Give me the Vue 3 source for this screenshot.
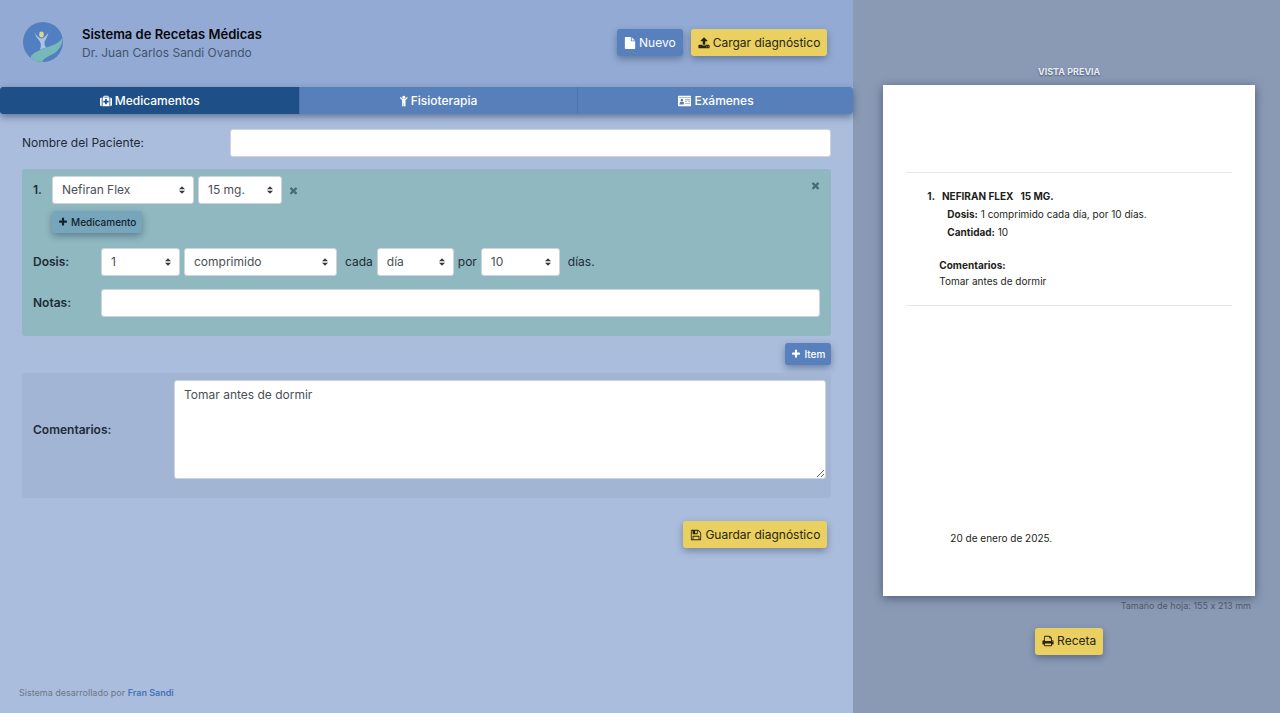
<script setup>
import { ref, computed, h } from 'vue'

const paths = {
  plus: 'M1600 736v192q0 40-28 68t-68 28h-416v416q0 40-28 68t-68 28h-192q-40 0-68-28t-28-68v-416h-416q-40 0-68-28t-28-68v-192q0-40 28-68t68-28h416v-416q0-40 28-68t68-28h192q40 0 68 28t28 68v416h416q40 0 68 28t28 68z',
  close: 'M1490 1322q0 40-28 68l-136 136q-28 28-68 28t-68-28l-294-294-294 294q-28 28-68 28t-68-28l-136-136q-28-28-28-68t28-68l294-294-294-294q-28-28-28-68t28-68l136-136q28-28 68-28t68 28l294 294 294-294q28-28 68-28t68 28l136 136q28 28 28 68t-28 68l-294 294 294 294q28 28 28 68z',
  upload: 'M1344 1472q0-26-19-45t-45-19-45 19-19 45 19 45 45 19 45-19 19-45zm256 0q0-26-19-45t-45-19-45 19-19 45 19 45 45 19 45-19 19-45zm128-224v320q0 40-28 68t-68 28h-1472q-40 0-68-28t-28-68v-320q0-40 28-68t68-28h427q21 56 70.5 92t110.5 36h256q61 0 110.5-36t70.5-92h427q40 0 68 28t28 68zm-325-648q-17 40-59 40h-256v448q0 26-19 45t-45 19h-256q-26 0-45-19t-19-45v-448h-256q-42 0-59-40-17-39 14-69l448-448q18-19 45-19t45 19l448 448q31 30 14 69z',
  print: 'M448 1536h896v-256h-896v256zm0-640h896v-384h-160q-40 0-68-28t-28-68v-160h-640v640zm1152 64q0-26-19-45t-45-19-45 19-19 45 19 45 45 19 45-19 19-45zm128 0v416q0 13-9.5 22.5t-22.5 9.5h-224v160q0 40-28 68t-68 28h-960q-40 0-68-28t-28-68v-160h-224q-13 0-22.5-9.5t-9.5-22.5v-416q0-79 56.5-135.5t135.5-56.5h64v-544q0-40 28-68t68-28h672q40 0 88 20t76 48l152 152q28 28 48 76t20 88v256h64q79 0 135.5 56.5t56.5 135.5z',
  save: 'M512 1536h768v-384h-768v384zm896 0h128v-896q0-14-10-38.5t-20-34.5l-281-281q-10-10-34-20t-39-10v416q0 40-28 68t-68 28h-576q-40 0-68-28t-28-68v-416h-128v1280h128v-416q0-40 28-68t68-28h832q40 0 68 28t28 68v416zm-384-928v-320q0-13-9.5-22.5t-22.5-9.5h-192q-13 0-22.5 9.5t-9.5 22.5v320q0 13 9.5 22.5t22.5 9.5h192q13 0 22.5-9.5t9.5-22.5zm640 32v928q0 40-28 68t-68 28h-1344q-40 0-68-28t-28-68v-1344q0-40 28-68t68-28h928q40 0 88 20t76 48l280 280q28 28 48 76t20 88z',
  file: 'M1152 512v-472q22 14 36 28l408 408q14 14 28 36h-472zm-128 32q0 40 28 68t68 28h544v1056q0 40-28 68t-68 28h-1344q-40 0-68-28t-28-68v-1600q0-40 28-68t68-28h800v544z',
  medkit: 'M1280 1088v-192q0-14-9-23t-23-9h-224v-224q0-14-9-23t-23-9h-192q-14 0-23 9t-9 23v224h-224q-14 0-23 9t-9 23v192q0 14 9 23t23 9h224v224q0 14 9 23t23 9h192q14 0 23-9t9-23v-224h224q14 0 23-9t9-23zm-640-704h512v-128h-512v128zm-384 0v1280h-32q-92 0-158-66t-66-158v-832q0-92 66-158t158-66h32zm1152 0v1280h-1024v-1280h128v-160q0-40 28-68t68-28h576q40 0 68 28t28 68v160h128zm384 224v832q0 92-66 158t-158 66h-32v-1280h32q92 0 158 66t66 158z',
  child: 'M1124 484l-292 292v824q0 46-33 79t-79 33-79-33-33-79v-384h-64v384q0 46-33 79t-79 33-79-33-33-79v-824l-292-292q-28-28-28-68t28-68q29-28 68.500-28t67.500 28l228 228h368l228-228q28-28 68-28t68 28q28 29 28 68.500t-28 67.500zm-324-164q0 93-65.500 158.500t-158.500 65.500-158.500-65.500-65.500-158.500 65.500-158.500 158.500-65.500 158.500 65.500 65.500 158.500z',
  card: 'M128 128h1792q53 0 90.500 37.500t37.500 90.500v1280q0 53-37.500 90.500t-90.500 37.500h-1792q-53 0-90.500-37.500t-37.500-90.500v-1280q0-53 37.500-90.500t90.500-37.500zM128 288v96h1792v-96zM256 1290q0-290 170-330 62 64 150 64t150-64q170 40 170 330 0 118-100 118h-540q-100 0-100-118zM384 736a192 192 0 1 0 384 0a192 192 0 1 0-384 0zM1056 1184h736v96h-736zM1056 928h288v96h-288zM1504 928h288v96h-288zM1056 672h736v96h-736z'
}
const widths = { child: 1152, card: 2048 }

const Icon = (props) =>
  h('svg', { class: 'icon', viewBox: `0 0 ${widths[props.name] || 1792} 1792`, 'aria-hidden': 'true' }, [
    h('path', { d: paths[props.name], 'fill-rule': props.name === 'card' ? 'evenodd' : 'nonzero' })
  ])
Icon.props = ['name']

const Arrows = () =>
  h('svg', { class: 'arrows', viewBox: '0 0 4 5', 'aria-hidden': 'true' }, [
    h('path', { d: 'M2 0L0 2h4zm0 5L0 3h4z' })
  ])

const tabs = [
  { id: 'med', label: 'Medicamentos', icon: 'medkit' },
  { id: 'fis', label: 'Fisioterapia', icon: 'child' },
  { id: 'exa', label: 'Exámenes', icon: 'card' }
]
const activeTab = ref('med')
const patient = ref('')
const drug = ref('Nefiran Flex')
const strength = ref('15 mg.')
const amount = ref('1')
const form = ref('comprimido')
const period = ref('día')
const days = ref('10')
const notes = ref('')
const comments = ref('Tomar antes de dormir')
const total = computed(() => Number(amount.value) * Number(days.value))
</script>

<template>
  <div class="app">
    <main class="editor">
      <header class="header">
        <svg class="logo" viewBox="0 0 40 40" aria-hidden="true">
          <circle cx="20" cy="20" r="20" fill="#527fc1" />
          <path d="M39.500 15.500C35 24 24 24 15 29C10 31.500 7 34 8 36Q12 39.500 19 40C22 34 29 34 34 29Q40 23 39.500 15.500Z" fill="#76b9b8" />
          <path d="M11.500 10.500Q15 16 18.500 16.500Q21 16.500 25.500 10.500Q23.500 17 21.500 19.500Q21 23 23 25.500L17 27.500Q19 22 16.500 19Q13 16 11.500 10.500Z" fill="#a9c4e2" />
          <ellipse cx="18.500" cy="12.500" rx="2.300" ry="3" fill="#d9d780" />
        </svg>
        <div class="brand">
          <h1>Sistema de Recetas Médicas</h1>
          <p>Dr. Juan Carlos Sandi Ovando</p>
        </div>
        <div class="actions">
          <button type="button" class="btn blue"><Icon name="file" />Nuevo</button>
          <button type="button" class="btn yellow"><Icon name="upload" />Cargar diagnóstico</button>
        </div>
      </header>

      <nav class="tabs">
        <button
          v-for="t in tabs"
          :key="t.id"
          type="button"
          class="tab"
          :class="{ active: activeTab === t.id }"
          @click="activeTab = t.id"
        ><Icon :name="t.icon" />{{ t.label }}</button>
      </nav>

      <form class="form" @submit.prevent>
        <div class="patient">
          <label for="patient">Nombre del Paciente:</label>
          <input id="patient" v-model="patient" type="text" class="control">
        </div>

        <section class="item">
          <button type="button" class="remove corner" aria-label="Quitar ítem"><Icon name="close" /></button>
          <div class="drug-row">
            <strong class="number">1.</strong>
            <span class="select drug">
              <select v-model="drug" class="control" aria-label="Medicamento"><option>Nefiran Flex</option></select><Arrows />
            </span>
            <span class="select strength">
              <select v-model="strength" class="control" aria-label="Concentración"><option>15 mg.</option></select><Arrows />
            </span>
            <button type="button" class="remove" aria-label="Quitar medicamento"><Icon name="close" /></button>
          </div>
          <button type="button" class="btn small teal"><Icon name="plus" />Medicamento</button>
          <div class="dose-row">
            <label class="field-name" for="amount">Dosis:</label>
            <span class="select short">
              <select id="amount" v-model="amount" class="control"><option>1</option></select><Arrows />
            </span>
            <span class="select kind">
              <select v-model="form" class="control" aria-label="Forma"><option>comprimido</option></select><Arrows />
            </span>
            <label class="word" for="period">cada</label>
            <span class="select period">
              <select id="period" v-model="period" class="control"><option>día</option></select><Arrows />
            </span>
            <label for="days">por</label>
            <span class="select short">
              <select id="days" v-model="days" class="control"><option>10</option></select><Arrows />
            </span>
            <span class="word">días.</span>
          </div>
          <div class="notes-row">
            <label class="field-name" for="notes">Notas:</label>
            <input id="notes" v-model="notes" type="text" class="control">
          </div>
        </section>

        <button type="button" class="btn small blue add-item"><Icon name="plus" />Item</button>

        <section class="comments">
          <label for="comments">Comentarios:</label>
          <textarea id="comments" v-model="comments" class="control"></textarea>
        </section>

        <button type="submit" class="btn yellow save"><Icon name="save" />Guardar diagnóstico</button>
      </form>

      <footer class="footer">Sistema desarrollado por <a href="#">Fran Sandi</a></footer>
    </main>

    <aside class="preview">
      <h2>VISTA PREVIA</h2>
      <article class="sheet">
        <div class="sheet-body">
          <div class="rx-title"><span>1.</span><span>{{ drug.toUpperCase() }}</span><span>{{ strength.toUpperCase() }}</span></div>
          <p class="rx-line"><b>Dosis:</b> {{ amount }} {{ form }} cada {{ period }}, por {{ days }} días.</p>
          <p class="rx-line"><b>Cantidad:</b> {{ total }}</p>
          <div class="rx-comments"><b>Comentarios:</b><p>{{ comments }}</p></div>
        </div>
        <p class="date">20 de enero de 2025.</p>
      </article>
      <p class="size">Tamaño de hoja: 155 x 213 mm</p>
      <button type="button" class="btn yellow"><Icon name="print" />Receta</button>
    </aside>
  </div>
</template>

<style>
body {
  margin: 0;
}
</style>

<style scoped>
.app {
  display: grid;
  grid-template-columns: 2fr 1fr;
  min-height: 100vh;
  font-family: Inter, "Liberation Sans", sans-serif;
  font-size: 12px;
  line-height: 18px;
  font-feature-settings: "calt" 0;
  color: #212b38;
}
.app * {
  box-sizing: border-box;
}
h1, h2, p {
  margin: 0;
}
button, input, select, textarea {
  font: inherit;
}
button {
  cursor: pointer;
}
.editor {
  position: relative;
  z-index: 1;
  display: flex;
  flex-direction: column;
  min-width: 0;
  background: #abbddd;
}
.header {
  display: flex;
  align-items: center;
  padding: 21px 26px 23px 23px;
  height: 87px;
  background: #93abd4;
}
.logo {
  width: 40px;
  height: 40px;
  margin: 0 19px 2px 0;
}
.brand {
  color: #42536c;
}
.brand h1 {
  font-size: 13px;
  line-height: 20px;
  font-weight: 600;
  color: #05070b;
}
.actions {
  display: flex;
  gap: 8px;
  margin-left: auto;
}
.app :deep(.icon) {
  height: 12px;
  flex: none;
  fill: currentColor;
}
.btn {
  display: inline-flex;
  align-items: center;
  justify-content: center;
  gap: 3px;
  height: 27px;
  padding: 0 7px;
  border: 0;
  border-radius: 3px;
  white-space: nowrap;
  box-shadow: 0 3px 7px rgba(30, 45, 75, 0.4);
}
.blue {
  background: #5780bd;
  color: #fff;
}
.yellow {
  background: #e9d060;
  color: #2b2508;
}
.teal {
  background: #76a5bc;
  color: #15212d;
}
.small {
  height: 22px;
  padding: 0 6px;
  font-size: 10px;
  font-weight: 500;
}
.small :deep(.icon) {
  height: 10px;
}
.tabs {
  display: flex;
  border-radius: 3px;
  box-shadow: 0 3px 7px rgba(30, 45, 75, 0.5);
}
.tab {
  display: flex;
  flex: 1 1 auto;
  align-items: center;
  justify-content: center;
  gap: 3px;
  height: 27px;
  padding: 0;
  border: 0;
  border-right: 1px solid #4a73b0;
  background: #5780bb;
  color: #fff;
  font-weight: 500;
}
.tab:last-child {
  border-right: 0;
  border-radius: 0 3px 3px 0;
}
.tab.active {
  background: #1e4f87;
  border-radius: 3px 0 0 3px;
}
.form {
  display: flex;
  flex-direction: column;
  padding: 15px 22px 0;
}
.control {
  display: block;
  width: 100%;
  height: 28px;
  padding: 0 9px;
  border: 1px solid #ced4da;
  border-radius: 3px;
  outline: 0;
  background: #fff;
  color: #495057;
}
select.control {
  appearance: none;
}
.select {
  position: relative;
  flex: none;
}
.select :deep(.arrows) {
  position: absolute;
  top: 10px;
  right: 9px;
  width: 6px;
  height: 8px;
  fill: #343a40;
  pointer-events: none;
}
.patient {
  display: grid;
  grid-template-columns: 208px 1fr;
  align-items: center;
}
.item {
  position: relative;
  margin-top: 12px;
  padding: 7px 11px 19px;
  border-radius: 3px;
  background: #8fb8c0;
}
.drug-row, .dose-row, .notes-row {
  display: flex;
  align-items: center;
  gap: 4px;
}
.number {
  width: 15px;
  font-weight: 600;
}
.drug {
  width: 142px;
}
.strength {
  width: 84px;
}
.short {
  width: 79px;
}
.period {
  width: 77px;
}
.kind {
  width: 153px;
}
.remove {
  display: flex;
  padding: 0;
  margin-left: 2px;
  border: 0;
  background: none;
  color: #496c74;
}
.remove :deep(.icon) {
  height: 11px;
}
.corner {
  position: absolute;
  top: 11px;
  right: 10px;
}
.item .small {
  margin: 7px 0 0 19px;
}
.dose-row {
  margin-top: 15px;
}
.notes-row {
  margin-top: 13px;
}
.field-name {
  flex: none;
  width: 64px;
  font-weight: 600;
}
.notes-row .control {
  flex: 1;
}
.word {
  margin-left: 4px;
}
.add-item {
  align-self: flex-end;
  margin-top: 7px;
}
.comments {
  display: grid;
  grid-template-columns: 141px 1fr;
  align-items: center;
  margin-top: 8px;
  padding: 7px 5px 19px 11px;
  border-radius: 3px;
  background: #a3b5d4;
}
.comments label {
  font-weight: 600;
}
.comments .control {
  height: 99px;
  padding: 5px 9px;
  resize: vertical;
}
.save {
  align-self: flex-end;
  margin: 23px 4px 0 0;
}
.footer {
  margin-top: auto;
  padding: 0 19px 11px;
  font-size: 9px;
  color: #6b7686;
}
.footer a {
  color: #4573bb;
  font-weight: 600;
  text-decoration: none;
}
.preview {
  display: flex;
  flex-direction: column;
  align-items: center;
  min-width: 0;
  padding: 63px 25px 0 30px;
  background: #8a9ab5;
}
.preview h2 {
  font-size: 9px;
  line-height: 18px;
  font-weight: 700;
  color: #e6ebf3;
  text-shadow: 0 1px 2px #46536a;
}
.sheet {
  display: flex;
  flex-direction: column;
  width: 100%;
  aspect-ratio: 155 / 213;
  margin-top: 4px;
  padding: 87px 23px 49px;
  background: #fff;
  color: #1c1e20;
  font-size: 10px;
  box-shadow: 0 2px 9px rgba(20, 30, 50, 0.5);
}
.sheet b {
  font-weight: 700;
}
.sheet-body {
  padding: 14px 21px 16px;
  border-top: 1px solid #e6e7e8;
  border-bottom: 1px solid #e6e7e8;
}
.rx-title {
  display: flex;
  gap: 7px;
  font-weight: 700;
}
.rx-line {
  padding-left: 20px;
}
.rx-comments {
  margin-top: 16px;
  padding-left: 12px;
  line-height: 16px;
}
.date {
  margin-top: auto;
  padding-left: 44px;
}
.size {
  align-self: flex-end;
  margin: 1px 4px 13px 0;
  font-size: 9px;
  color: #4c586b;
}
</style>
